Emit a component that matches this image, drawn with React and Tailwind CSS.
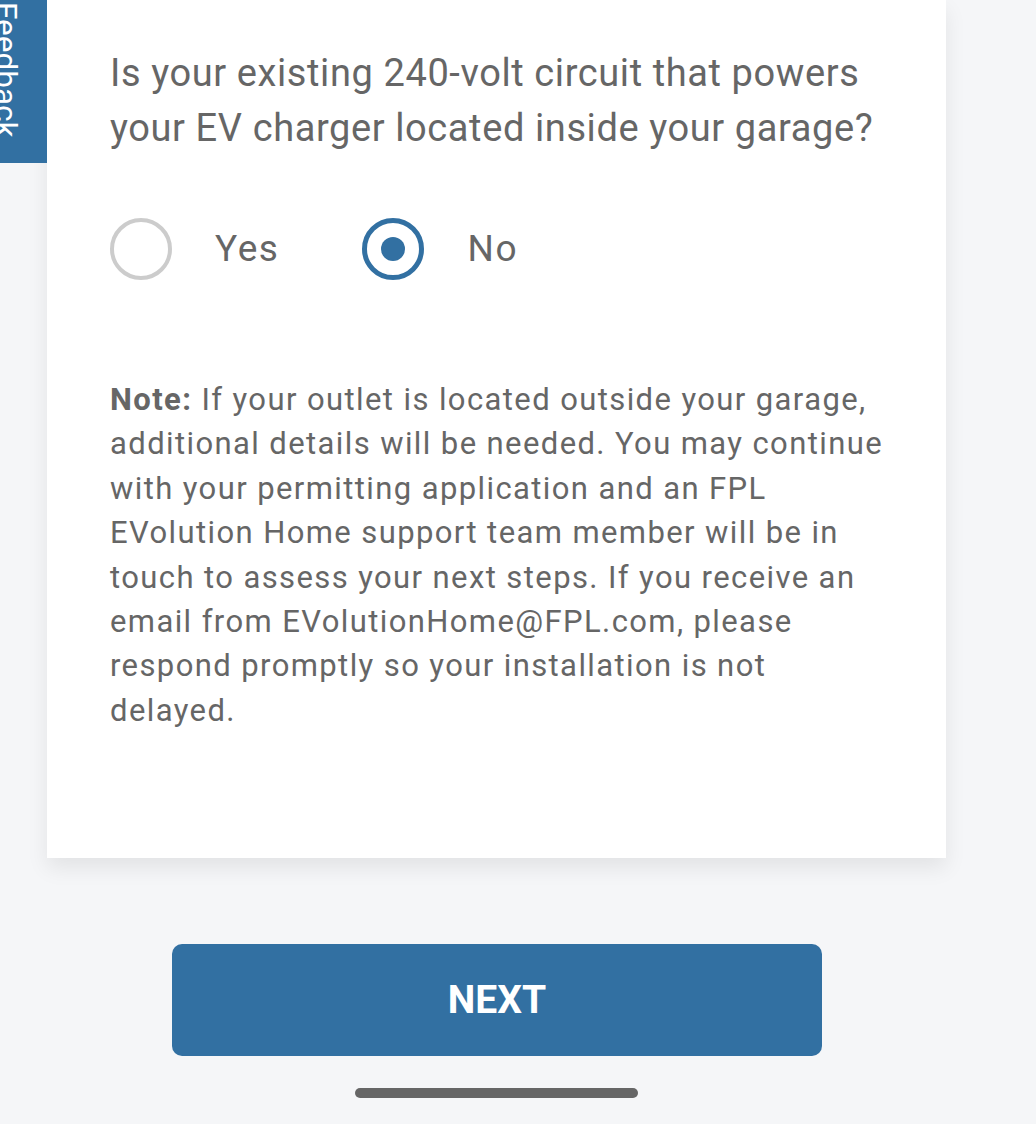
export default function App() {
  return (
    <div className="relative h-[1124px] w-full overflow-hidden bg-[#f5f6f8] font-['Roboto',sans-serif]">
      <div className="absolute left-0 top-0 z-10 flex h-[163px] w-[47px] items-start justify-end overflow-hidden bg-[#3270a2]">
        <span className="mr-[26px] mt-[2px] text-[31.5px] leading-none text-white [writing-mode:vertical-rl]">Feedback</span>
      </div>

      <div className="ml-[47px] h-[858px] w-[899px] bg-white pl-[63px] pr-[58px] pt-[46px] shadow-[0_10px_20px_rgba(0,0,0,0.08)]">
        <h1 className="text-[38px] leading-[55px] tracking-[0.6px] text-[#666666]">
          Is your existing 240-volt circuit that powers your EV charger located inside your garage?
        </h1>

        <div className="mt-[62px] flex items-center">
          <label className="flex items-center">
            <span className="h-[62px] w-[62px] rounded-full border-[4px] border-[#cccccc]" />
            <span className="ml-[43px] text-[37px] tracking-[1.6px] text-[#666666]">Yes</span>
          </label>
          <label className="ml-[82px] flex items-center">
            <span className="flex h-[62px] w-[62px] items-center justify-center rounded-full border-[5px] border-[#3270a2]">
              <span className="h-[24px] w-[24px] rounded-full bg-[#3270a2]" />
            </span>
            <span className="ml-[44px] text-[37px] tracking-[1.6px] text-[#666666]">No</span>
          </label>
        </div>

        <p className="mt-[98px] text-[31px] leading-[44.4px] tracking-[1.4px] text-[#666666]">
          <strong className="font-bold">Note:</strong> If your outlet is located outside your garage, additional details will be needed. You may continue with your permitting application and an FPL EVolution Home support team member will be in touch to assess your next steps. If you receive an email from EVolutionHome@FPL.com, please respond promptly so your installation is not delayed.
        </p>
      </div>

      <button className="ml-[172px] mt-[86px] flex h-[112px] w-[650px] items-center justify-center rounded-[10px] bg-[#3270a2] text-[39px] font-bold text-white">
        NEXT
      </button>

      <div className="ml-[355px] mt-[32px] h-[10px] w-[283px] rounded-full bg-[#666666]" />
    </div>
  );
}
